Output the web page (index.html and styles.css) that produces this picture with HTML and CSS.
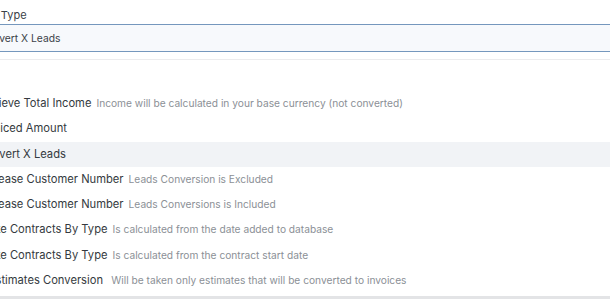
FILE: index.html
```html
<!DOCTYPE html>
<html lang="en">
<head>
<meta charset="utf-8">
<title>Goal Type</title>
<link rel="stylesheet" href="styles.css">
</head>
<body>
<div class="panel">
  <label class="field-label">Goal Type</label>
  <div class="select-box">Convert X Leads</div>
  <div class="dropdown">
    <ul class="options">
      <li class="option"><span class="opt-name">Achieve Total Income</span><span class="opt-hint">Income will be calculated in your base currency (not converted)</span></li>
      <li class="option"><span class="opt-name">Invoiced Amount</span></li>
      <li class="option is-active"><span class="opt-name">Convert X Leads</span></li>
      <li class="option"><span class="opt-name">Increase Customer Number</span><span class="opt-hint">Leads Conversion is Excluded</span></li>
      <li class="option"><span class="opt-name">Increase Customer Number</span><span class="opt-hint">Leads Conversions is Included</span></li>
      <li class="option"><span class="opt-name">Make Contracts By Type</span><span class="opt-hint">Is calculated from the date added to database</span></li>
      <li class="option"><span class="opt-name">Make Contracts By Type</span><span class="opt-hint">Is calculated from the contract start date</span></li>
      <li class="option"><span class="opt-name">X Estimates Conversion&nbsp;</span><span class="opt-hint">Will be taken only estimates that will be converted to invoices</span></li>
      <li class="option"><span class="opt-name">Proposals Conversion</span></li>
    </ul>
  </div>
</div>
</body>
</html>
```

FILE: styles.css
```css
html, body {
  margin: 0;
  padding: 0;
  background: #ffffff;
  overflow: hidden;
  height: 300px;
}
body {
  font-family: Inter, "Noto Sans", sans-serif;
  color: #333a40;
}
.panel {
  width: 720px;
  margin-left: -30px;
  display: flex;
  flex-direction: column;
}
.field-label {
  display: block;
  font-size: 11px;
  line-height: 14px;
  padding: 8px 0 0 4px;
  height: 16px;
  color: #3b4248;
}
.select-box {
  height: 26px;
  line-height: 26px;
  border-top: 1.5px solid #7597bd;
  border-bottom: 1.5px solid #7597bd;
  background: #f7f9fc;
  font-size: 10.3px;
  padding-left: 9.6px;
  color: #3b4248;
}
.dropdown {
  margin-top: 7px;
  border-top: 1px solid #ececee;
  padding-top: 31px;
  height: 205px;
  overflow: hidden;
  border-bottom: 3px solid #e3e4e6;
}
.options {
  list-style: none;
  margin: 0;
  padding: 0;
}
.option {
  display: flex;
  align-items: baseline;
  gap: 5px;
  height: 25.3px;
  line-height: 25.3px;
  padding-left: 8px;
  white-space: nowrap;
}
.option.is-active {
  background: #f1f3f6;
}
.opt-name {
  font-size: 11.2px;
  color: #343a40;
}
.opt-hint {
  font-size: 10.2px;
  color: #8b9096;
}
```
